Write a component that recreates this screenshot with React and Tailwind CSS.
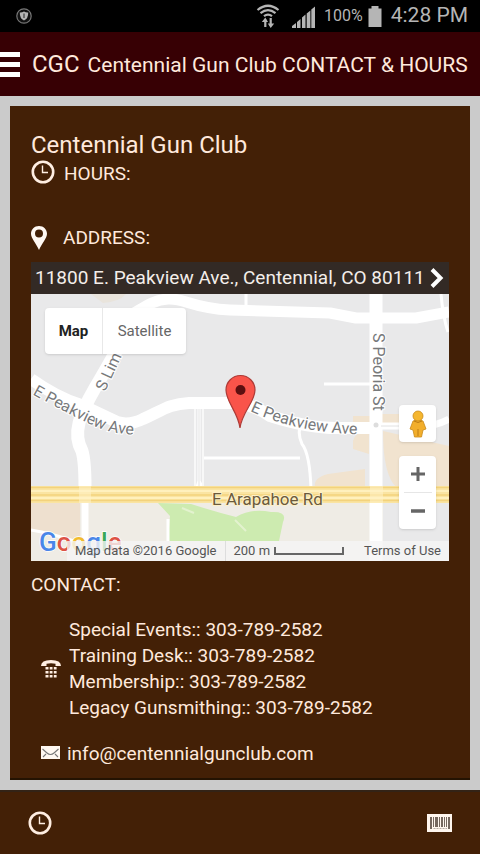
import React from "react";

const contacts = [
  { label: "Special Events::", phone: "303-789-2582" },
  { label: "Training Desk::", phone: "303-789-2582" },
  { label: "Membership::", phone: "303-789-2582" },
  { label: "Legacy Gunsmithing::", phone: "303-789-2582" },
];

function ClockIcon() {
  return (
    <svg className="h-6 w-6 shrink-0" viewBox="0 0 24 24" fill="none" stroke="#ffeee2" aria-hidden="true">
      <circle cx="12" cy="12" r="10.2" strokeWidth="2.6" />
      <path d="M11.5 5.5V12.5H17" strokeWidth="1.4" />
    </svg>
  );
}

function PinIcon() {
  return (
    <svg className="h-6 w-4 shrink-0" viewBox="0 0 16 24" aria-hidden="true">
      <path
        fillRule="evenodd"
        fill="#fff8f2"
        d="M8 0C3.4 0 0 3.5 0 7.8C0 12.5 5 17 8 24C11 17 16 12.5 16 7.8C16 3.5 12.6 0 8 0ZM8 3.6A4 4 0 1 1 8 11.6A4 4 0 1 1 8 3.6Z"
      />
    </svg>
  );
}

function StatusBar() {
  return (
    <div className="flex h-8 items-center justify-between bg-black pr-3 pl-4 text-[#b5b5b5]">
      <svg className="h-4 w-4" viewBox="0 0 16 16" aria-hidden="true">
        <circle cx="8" cy="8" r="7.2" fill="#111" stroke="#777" strokeWidth="1.2" />
        <path d="M3.8 4.5Q6 4.7 8 3.5Q10 4.7 12.2 4.5Q12.4 10.5 8 12.6Q3.6 10.5 3.8 4.5Z" fill="#b5b5b5" />
        <path d="M8 5.5V10" stroke="#555" strokeWidth="1.5" />
      </svg>
      <div className="flex items-center">
        <svg className="mr-3 h-6 w-6" viewBox="0 0 24 24" fill="none" stroke="currentColor" aria-hidden="true">
          <path d="M1.500 6Q12 -2.500 22.500 6M4.500 9.200Q12 3 19.500 9.200M8 12.200Q12 9 16 12.200" strokeWidth="2.2" />
          <path d="M9.300 23V15.500M14.700 14V22" strokeWidth="2.2" />
          <path d="M5.800 18L9.300 13.500L12 18ZM11.800 19.500L14.700 24L18.200 19.500Z" fill="currentColor" stroke="none" />
        </svg>
        <svg className="mr-2 h-6 w-6" viewBox="0 0 24 24" fill="currentColor" aria-hidden="true">
          <path d="M0 24V22L4 19V24ZM5 24V18L8.500 15V24ZM10 24V13.500L13.500 10.500V24ZM14.700 24V9.500L18.400 6.500V24ZM19.300 24V5.500L23 2.500V24Z" />
        </svg>
        <span className="mr-1 text-base">100%</span>
        <svg className="mr-2 h-6 w-4" viewBox="0 0 16 24" fill="currentColor" aria-hidden="true">
          <path d="M4.500 2H11.500V4.500H14.500V23H1.500V4.500H4.500Z" />
        </svg>
        <span className="text-[21px]">4:28 PM</span>
      </div>
    </div>
  );
}

function MapCanvas() {
  return (
    <svg
      className="block h-full w-full"
      viewBox="0 0 418 267"
      preserveAspectRatio="xMidYMid slice"
      role="img"
      aria-label="Street map around E Peakview Ave"
    >
      <rect width="418" height="267" fill="#e9e9ea" />
      <path d="M0 209H418V267H0Z" fill="#efece5" />
      <path d="M0 209H49V249Q20 240 0 236Z" fill="#eee0cf" />
      <path d="M352 209H418V267H352Z" fill="#e9e9ea" />
      <path d="M60 0H95Q88 8 72 9Z" fill="#e9e4dc" />
      <path d="M284 193Q282 184 297 180L334 175V193ZM322 147Q325 137 338 135V160L322 155ZM322 122H340V132H322ZM350 120H368V135H350ZM352 137L418 152V193H365Q352 180 352 137Z" fill="#f1e3cf" />
      <path d="M127 209L160 210Q185 218 205 223Q220 214 240 218Q257 217 252 228L248 247H137L139 222Z" fill="#cdebb0" />
      <path d="M204 226L215 237M151 214L163 219" stroke="#e3f2cf" strokeWidth="2" />
      <g fill="none" stroke="#fff" strokeLinejoin="round">
        <path d="M98 22C110 16 120 6 137 5S160 14 199 16L299 19L325 24H385L418 18" strokeWidth="11" />
        <path d="M103 20C94 44 78 70 64 94C49 120 41 139 51 157Q54 167 54 193V209" strokeWidth="13" />
        <path d="M54 205V267" strokeWidth="7" />
        <path d="M0 85Q25 103 50 111L86 128Q98 132 112 125C132 116 138 110 158 109H209Q224 112 239 122Q280 135 310 134H345" strokeWidth="12" />
        <path d="M345 0V267" strokeWidth="13" />
        <path d="M345 132H375Q400 135 418 125" strokeWidth="7" />
        <path d="M168 115V196M165 196L168 187L173 196M171 164H269M272 128Q265 137 271 150Q279 160 280 196M293 90H345M410 0Q412 23 417 38M215 0V17M0 236Q20 239 49 249M137 225V247" strokeWidth="3" />
        <path d="M164 115V192M172 115V192" stroke="#f8f8f8" strokeWidth="2" />
        <path d="M168 115V192" stroke="#ececed" strokeWidth="1.5" />
        <path d="M350 132H375" stroke="#e2e2e2" strokeWidth="1" />
      </g>
      <path d="M0 192H418V209H0Z" fill="#fae4a2" />
      <path d="M0 193.500H418M0 201H418M0 206.500H418" stroke="#f3d27c" strokeWidth="1.5" />
      <path d="M0 197H418M0 204H418" stroke="#fff0bd" strokeWidth="2" />
      <path d="M48 192H60V209H48ZM339 192H352V209H339Z" fill="#fff3c8" opacity=".55" />
      <circle cx="345" cy="131" r="2.5" fill="#ddd" />
      <defs>
        <path id="peakview-west" d="M1 100Q35 119 61 131Q84 143 130 141" />
        <path id="peakview-east" d="M219 117Q275 143 350 140" />
      </defs>
      <g fill="#77797b" stroke="#fff" strokeWidth="2" paintOrder="stroke" fontSize="16">
        <text>
          <textPath href="#peakview-west">E Peakview Ave</textPath>
        </text>
        <text>
          <textPath href="#peakview-east">E Peakview Ave</textPath>
        </text>
        <text transform="translate(74 98) rotate(-65)">S Lim</text>
        <text transform="translate(342 39) rotate(90)">S Peoria St</text>
      </g>
      <text x="181" y="211" fontSize="17" fill="#6b5a3c" stroke="#fdf0c8" strokeWidth="2" paintOrder="stroke">
        E Arapahoe Rd
      </text>
      <path
        d="M209 134C207 118 195 108 195 96A14.5 14.5 0 0 1 224 96C224 108 211 118 209 134Z"
        fill="#f9544a"
        stroke="#ad3a36"
        strokeWidth="1.2"
      />
      <circle cx="209.5" cy="96" r="5" fill="#5c0f10" />
      <text x="8" y="257" fontSize="26" fontWeight="500" stroke="#fff" strokeWidth="1.5" paintOrder="stroke">
        <tspan fill="#4a86e8">G</tspan>
        <tspan fill="#dd5345">o</tspan>
        <tspan fill="#f2bb2e">o</tspan>
        <tspan fill="#4a86e8">g</tspan>
        <tspan fill="#3aa757">l</tspan>
        <tspan fill="#dd5345">e</tspan>
      </text>
    </svg>
  );
}

function MapPanel() {
  return (
    <section className="relative h-[267px] overflow-hidden" aria-label="Map">
      <MapCanvas />
      <div className="absolute top-[14px] left-[14px] flex h-[46px] rounded-sm bg-white text-[15px] shadow">
        <button type="button" className="w-[58px] border-r border-[#e8e8e8] font-bold text-[#222]">
          Map
        </button>
        <button type="button" className="w-[83px] text-[#666]">
          Satellite
        </button>
      </div>
      <div className="absolute top-[111px] right-[13px] flex flex-col gap-[14px]">
        <button type="button" aria-label="Street view" className="flex h-[37px] w-[37px] items-center justify-center rounded-sm bg-white shadow">
          <svg className="h-7 w-5" viewBox="0 0 20 28" aria-hidden="true">
            <path d="M5 11Q10 8 15 11L18 19L15 20L13.5 27H6.5L5 20L2 19Z" fill="#f2ae2b" stroke="#c98a1a" strokeWidth=".8" />
            <circle cx="10" cy="6" r="5" fill="#f5b62f" stroke="#c98a1a" strokeWidth=".8" />
            <path d="M6 11Q10 14 14 11M10 19V26" stroke="#bd7c15" fill="none" />
          </svg>
        </button>
        <div className="flex h-[73px] w-[37px] flex-col items-center rounded-sm bg-white shadow">
          <button type="button" aria-label="Zoom in" className="flex w-full flex-1 items-center justify-center">
            <svg className="h-4 w-4" viewBox="0 0 16 16" stroke="#666" strokeWidth="3" aria-hidden="true">
              <path d="M1 8H15M8 1V15" />
            </svg>
          </button>
          <span className="h-px w-7 bg-[#e6e6e6]" />
          <button type="button" aria-label="Zoom out" className="flex w-full flex-1 items-center justify-center">
            <svg className="h-4 w-4" viewBox="0 0 16 16" stroke="#666" strokeWidth="3.5" aria-hidden="true">
              <path d="M1 8H15" />
            </svg>
          </button>
        </div>
      </div>
      <div className="absolute right-0 bottom-0 flex h-5 items-center bg-[#f5f5f5]/80 text-[13px] whitespace-nowrap text-[#555]">
        <span className="px-2">Map data ©2016 Google</span>
        <span className="flex items-center gap-1 border-l border-[#ddd] px-2">
          200 m
          <span className="h-2 w-[70px] border-2 border-t-0 border-[#666]" />
        </span>
        <a href="#terms" className="pr-2 pl-3">
          Terms of Use
        </a>
      </div>
    </section>
  );
}

export default function App() {
  return (
    <div className="flex min-h-screen flex-col bg-[#cbcbcb] font-['Roboto',sans-serif] text-[#ffe9dc]">
      <StatusBar />
      <header className="flex h-16 items-center bg-[#370004] whitespace-nowrap">
        <button type="button" aria-label="Open menu" className="mr-3 flex w-5 flex-col gap-[5px]">
          <span className="h-[5px] w-full bg-white" />
          <span className="h-[5px] w-full bg-white" />
          <span className="h-[5px] w-full bg-white" />
        </button>
        <span className="mr-2 text-2xl">CGC</span>
        <h1 className="mt-1 text-[21px]">Centennial Gun Club CONTACT &amp; HOURS</h1>
      </header>

      <main className="flex flex-1 flex-col p-[10px]">
        <article className="flex-1 border-b-2 border-[#241302] bg-[#432006] px-[21px] pt-6 text-[19px]">
          <h2 className="text-2xl leading-[30px]">Centennial Gun Club</h2>
          <h3 className="flex h-6 items-center gap-[9px] leading-6">
            <ClockIcon />
            <span className="mt-1">HOURS:</span>
          </h3>
          <h3 className="mt-[42px] flex h-6 items-center gap-4 leading-6">
            <PinIcon />
            ADDRESS:
          </h3>
          <a href="#directions" className="mt-3 flex h-8 items-center justify-between bg-[#332a25] pr-1 pl-1 whitespace-nowrap text-[#f4eeea]">
            11800 E. Peakview Ave., Centennial, CO 80111
            <svg className="h-5 w-4" viewBox="0 0 16 20" fill="none" stroke="#fff" strokeWidth="4" aria-hidden="true">
              <path d="M3 1.500L11.500 10L3 18.500" />
            </svg>
          </a>
          <MapPanel />
          <h3 className="mt-3 leading-6">CONTACT:</h3>
          <div className="mt-5 flex items-center gap-2 pl-[10px]">
            <svg className="h-5 w-5 shrink-0" viewBox="0 0 20 20" fill="#ffeee2" aria-hidden="true">
              <path d="M0 7Q0 1 10 1T20 7H14.500V4.800Q10 3.800 5.500 4.800V7Z" />
              <path d="M4.500 8H7.500V10.500H4.500ZM8.700 8H11.500V10.500H8.700ZM12.800 8H15.600V10.500H12.800ZM4.500 12H7.500V14.500H4.500ZM8.700 12H11.500V14.500H8.700ZM12.800 12H15.600V14.500H12.800ZM4.500 16H7.500V18.500H4.500ZM8.700 16H11.500V18.500H8.700ZM12.800 16H15.600V18.500H12.800Z" />
            </svg>
            <ul className="leading-[26px]">
              {contacts.map((c) => (
                <li key={c.label}>
                  {c.label} <a href={"tel:" + c.phone}>{c.phone}</a>
                </li>
              ))}
            </ul>
          </div>
          <a href="mailto:info@centennialgunclub.com" className="mt-5 flex items-center gap-[6px] pl-[10px] leading-[26px]">
            <svg className="h-4 w-5" viewBox="0 0 20 16" aria-hidden="true">
              <rect x="0" y="0" width="19" height="13" fill="#fff8f2" />
              <path d="M1.500 3L6 7Q9.500 10 13 7L17.500 3M2 11L5 8M17 11L14 8" fill="none" stroke="#777" strokeWidth="1.1" />
            </svg>
            info@centennialgunclub.com
          </a>
        </article>
      </main>

      <footer className="flex h-16 items-center justify-between border-t-2 border-[#332316] bg-[#432006] px-7">
        <button type="button" aria-label="Hours">
          <ClockIcon />
        </button>
        <button type="button" aria-label="Membership card">
          <svg className="h-[18px] w-[25px]" viewBox="0 0 25 18" aria-hidden="true">
            <rect width="25" height="18" fill="#fff6ee" />
            <path d="M3 3H5V15H3ZM6 3H7V13H6ZM8 3H11V13H8ZM12 3H13V13H12ZM14 3H16V13H14ZM17 3H18V13H17ZM19 3H20V13H19ZM21 3H23V15H21Z" fill="#75685f" />
            <path d="M6.500 14.500H20" stroke="#b5aba3" strokeDasharray="2 1" />
          </svg>
        </button>
      </footer>
    </div>
  );
}
